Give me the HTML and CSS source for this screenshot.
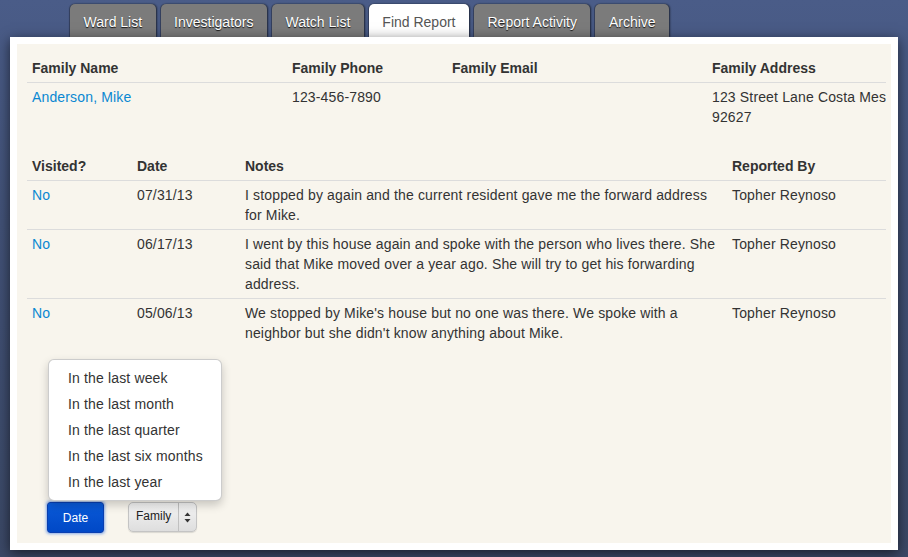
FILE: index.html
```html
<!DOCTYPE html>
<html>
<head>
<meta charset="utf-8">
<title>Find Report</title>
<link rel="stylesheet" href="styles.css">
</head>
<body>
<div class="page">
  <nav class="tabs">
    <a class="tab">Ward List</a>
    <a class="tab">Investigators</a>
    <a class="tab">Watch List</a>
    <a class="tab active">Find Report</a>
    <a class="tab">Report Activity</a>
    <a class="tab">Archive</a>
  </nav>
  <div class="frame">
    <div class="panel">
      <div class="clip">
        <table class="grid family">
          <colgroup><col class="c-name"><col class="c-phone"><col class="c-email"><col class="c-addr"></colgroup>
          <thead>
            <tr><th>Family Name</th><th>Family Phone</th><th>Family Email</th><th>Family Address</th></tr>
          </thead>
          <tbody>
            <tr><td><a class="link">Anderson, Mike</a></td><td>123-456-7890</td><td></td><td>123 Street Lane Costa Mesa, CA<br>92627</td></tr>
          </tbody>
        </table>
        <table class="grid reports">
          <colgroup><col class="c-visited"><col class="c-date"><col class="c-notes"><col class="c-by"></colgroup>
          <thead>
            <tr><th>Visited?</th><th>Date</th><th>Notes</th><th>Reported By</th></tr>
          </thead>
          <tbody>
            <tr><td><a class="link">No</a></td><td>07/31/13</td><td>I stopped by again and the current resident gave me the forward address for Mike.</td><td>Topher Reynoso</td></tr>
            <tr><td><a class="link">No</a></td><td>06/17/13</td><td>I went by this house again and spoke with the person who lives there. She said that Mike moved over a year ago. She will try to get his forwarding address.</td><td>Topher Reynoso</td></tr>
            <tr><td><a class="link">No</a></td><td>05/06/13</td><td>We stopped by Mike's house but no one was there. We spoke with a neighbor but she didn't know anything about Mike.</td><td>Topher Reynoso</td></tr>
          </tbody>
        </table>
      </div>
      <div class="filters">
        <div class="dropup">
          <ul class="menu">
            <li>In the last week</li>
            <li>In the last month</li>
            <li>In the last quarter</li>
            <li>In the last six months</li>
            <li>In the last year</li>
          </ul>
          <button class="btn-date">Date</button>
        </div>
        <div class="select">
          <span class="select-label">Family</span>
          <span class="select-arrows">
            <svg width="7" height="11" viewBox="0 0 7 11"><path d="M3.5 0.5 L6.5 4 L0.5 4 Z" fill="#333"/><path d="M3.5 10.5 L6.5 7 L0.5 7 Z" fill="#333"/></svg>
          </span>
        </div>
      </div>
    </div>
  </div>
</div>
</body>
</html>
```

FILE: styles.css
```css
html, body {
  margin: 0;
  padding: 0;
  height: 100%;
}
body {
  background: linear-gradient(180deg, #4a5c88 0%, #425277 40%, #3b4866 100%);
  font-family: "Liberation Sans", Arial, Helvetica, sans-serif;
  font-size: 14px;
  line-height: 20px;
  color: #333;
  overflow: hidden;
}
.page {
  padding-top: 4px;
}
.tabs {
  display: flex;
  gap: 5px;
  margin-left: 70px;
  height: 33px;
}
.tab {
  display: block;
  padding: 8px 13.5px 5px;
  background: #7b7b7b;
  color: #fff;
  text-shadow: 0 1px 1px rgba(0, 0, 0, 0.85);
  border-radius: 5px 5px 0 0;
  box-shadow: 1px 0 2px rgba(0, 0, 0, 0.6), -1px 0 1px rgba(0, 0, 0, 0.3);
  white-space: nowrap;
}
.tab.active {
  background: #fff;
  color: #555;
  text-shadow: none;
}
.frame {
  margin: 0 10px;
  background: #fff;
  padding: 7px;
  height: 499px;
  box-shadow: 0 3px 12px rgba(0, 0, 0, 0.6);
  position: relative;
}
.panel {
  background: #f8f5ed;
  height: 499px;
  box-sizing: border-box;
  padding: 10px 5px 0 10px;
  overflow: hidden;
}
.clip {
  overflow: hidden;
}
.grid {
  border-collapse: collapse;
  table-layout: fixed;
  margin-bottom: 21px;
}
.grid th,
.grid td {
  padding: 4px 5px;
  text-align: left;
  vertical-align: top;
  line-height: 20px;
}
.grid th {
  font-weight: bold;
  border-bottom: 1px solid #dcdcdc;
}
.grid td {
  letter-spacing: 0.15px;
}
.grid tbody tr + tr td {
  border-top: 1px solid #dcdcdc;
}
.family {
  width: 940px;
}
.c-name { width: 260px; }
.c-phone { width: 160px; }
.c-email { width: 260px; }
.c-addr { width: 260px; }
.family td:last-child { white-space: nowrap; }
.reports {
  width: 860px;
  margin-bottom: 0;
}
.c-visited { width: 105px; }
.c-date { width: 108px; }
.c-notes { width: 487px; }
.c-by { width: 160px; }
.link {
  color: #0a88d2;
  text-decoration: none;
}
.filters {
  display: flex;
  align-items: flex-start;
  gap: 24px;
  margin-top: 155px;
  margin-left: 20px;
}
.dropup {
  position: relative;
}
.menu {
  position: absolute;
  left: 1px;
  bottom: calc(100% + 1px);
  margin: 0;
  padding: 5px 0;
  list-style: none;
  width: 172px;
  background: #fff;
  border: 1px solid rgba(0, 0, 0, 0.2);
  border-radius: 6px;
  box-shadow: 0 4px 10px rgba(0, 0, 0, 0.2);
}
.menu li {
  padding: 3px 20px 3px 19px;
  line-height: 20px;
  color: #333;
  white-space: nowrap;
  letter-spacing: 0.15px;
}
.btn-date {
  display: block;
  width: 57px;
  height: 31px;
  border: 1px solid #0a3fb0;
  border-radius: 3px;
  background: linear-gradient(180deg, #0a5ad8 0%, #0048c6 100%);
  color: #fff;
  font-family: "Liberation Sans", Arial, sans-serif;
  font-size: 12px;
  padding: 0;
  box-shadow: 0 0 3px 1px rgba(40, 110, 230, 0.55);
}
.select {
  display: flex;
  align-items: stretch;
  width: 69px;
  height: 30px;
  box-sizing: border-box;
  border: 1px solid #c4c4c4;
  border-radius: 5px;
  background: linear-gradient(180deg, #f4f4f4 0%, #dedede 100%);
  box-shadow: 0 1px 1px rgba(0, 0, 0, 0.12);
  font-size: 12px;
  color: #222;
}
.select-label {
  display: flex;
  align-items: center;
  padding-left: 7px;
  width: 50px;
  box-sizing: border-box;
  border-right: 1px solid #c0c0c0;
  padding-bottom: 2px;
}
.select-arrows {
  flex: 1;
  display: flex;
  align-items: center;
  justify-content: center;
}
```
